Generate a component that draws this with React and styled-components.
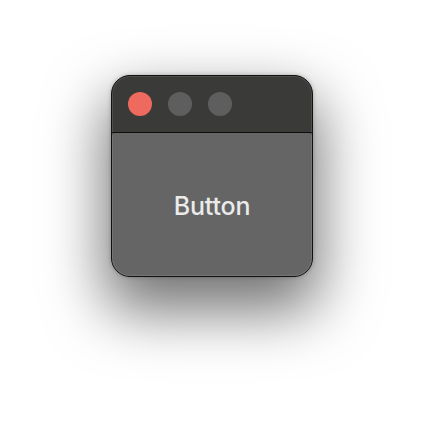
import React from "react";
import styled, { createGlobalStyle } from "styled-components";

const GlobalStyle = createGlobalStyle`
  html, body {
    margin: 0;
    padding: 0;
    background: #ffffff;
  }
  body {
    font-family: Inter, "Noto Sans", "Liberation Sans", sans-serif;
  }
`;

const Page = styled.div`
  display: flex;
  justify-content: center;
  padding-top: 75px;
  height: 424px;
  box-sizing: border-box;
`;

const Window = styled.div`
  width: 202px;
  height: 202px;
  box-sizing: border-box;
  display: flex;
  flex-direction: column;
  border: 1px solid #111;
  border-radius: 19px;
  overflow: hidden;
  background: #3a3a38;
  box-shadow: 0 28px 60px 6px rgba(0, 0, 0, 0.55), 0 0 4px rgba(0, 0, 0, 0.25);
  position: relative;

  &::after {
    content: "";
    position: absolute;
    inset: 0;
    border-radius: 18px;
    box-shadow: inset 0 0 0 1px rgba(255, 255, 255, 0.1);
    pointer-events: none;
  }
`;

const TitleBar = styled.div`
  height: 56px;
  flex: none;
  display: flex;
  align-items: center;
  gap: 16px;
  padding-left: 16px;
  border-bottom: 1px solid #0d0d0d;
`;

const Light = styled.span`
  width: 24px;
  height: 24px;
  border-radius: 50%;
  background: ${(p) => p.$color};
`;

const Body = styled.button`
  flex: 1;
  border: none;
  margin: 0;
  background: #656565;
  border-radius: 3px 3px 0 0;
  color: #ebebeb;
  font-family: Inter, "Noto Sans", "Liberation Sans", sans-serif;
  font-size: 25px;
  font-weight: 500;
  letter-spacing: -0.2px;
  display: flex;
  align-items: center;
  justify-content: center;
  padding: 2px 0 0;
  cursor: pointer;
`;

export default function App() {
  return (
    <>
      <GlobalStyle />
      <Page>
        <Window>
          <TitleBar>
            <Light $color="#ee6a5e" />
            <Light $color="#5e5e5e" />
            <Light $color="#5e5e5e" />
          </TitleBar>
          <Body>Button</Body>
        </Window>
      </Page>
    </>
  );
}
